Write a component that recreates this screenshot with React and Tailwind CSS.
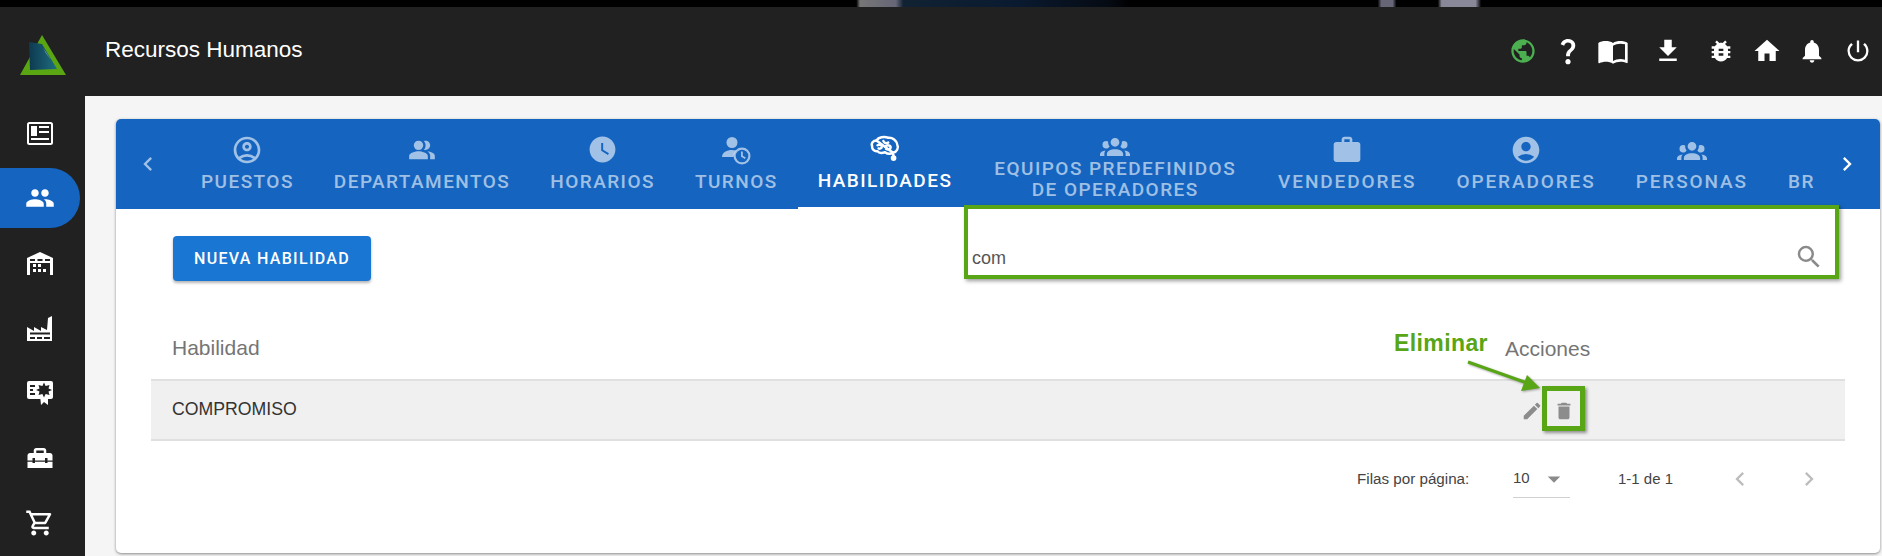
import React from 'react';
import {
  MdOutlineAccountCircle, MdPeopleAlt, MdWatchLater, MdWork, MdAccountCircle,
  MdChevronLeft, MdChevronRight, MdPeople, MdHomeRepairService, MdOutlineShoppingCart,
  MdPublic, MdQuestionMark, MdImportContacts, MdFileDownload, MdBugReport, MdHome,
  MdNotifications, MdPowerSettingsNew, MdSearch, MdEdit, MdDelete, MdArrowDropDown,
} from 'react-icons/md';

const Logo = () => (
  <svg width="46" height="40" viewBox="0 0 46 40">
    <defs>
      <linearGradient id="logoTeal" x1="0" x2="1" y1="0" y2="0">
        <stop offset="0" stopColor="#0d3a50" />
        <stop offset="1" stopColor="#1f6d80" />
      </linearGradient>
    </defs>
    <path d="M22 0L46 40H0Z" fill="#5aa512" />
    <path d="M9 7L22 9L37 34L10 35Z" fill="url(#logoTeal)" />
    <path d="M23 13L31 25L26 18Z" fill="#ffffff" />
  </svg>
);

const NewsIcon = () => (
  <svg width="26" height="23" viewBox="0 0 26 23">
    <rect x="1" y="1" width="24" height="21" rx="1.5" fill="none" stroke="#fff" strokeWidth="2" />
    <rect x="4" y="4" width="6" height="10" fill="#fff" />
    <rect x="12" y="4" width="10" height="2" fill="#fff" />
    <rect x="12" y="9" width="10" height="2" fill="#fff" />
    <rect x="4" y="16" width="18" height="2" fill="#fff" />
  </svg>
);

const WarehouseIcon = () => (
  <svg width="26" height="23" viewBox="0 0 26 23">
    <path d="M0 6L13 0L26 6V23H0Z" fill="#fff" />
    <path d="M3 7h5v2H3zM10.5 7h5v2h-5zM18 7h5v2h-5z" fill="#212121" />
    <rect x="3" y="11" width="20" height="12" fill="#212121" />
    <path d="M6 12h3v3H6zM11 12h3v3h-3zM6 17h3v3H6zM11 17h3v3h-3zM16 17h3v3h-3z" fill="#fff" />
  </svg>
);

const FactoryIcon = () => (
  <svg width="26" height="25" viewBox="0 0 26 25">
    <path d="M0 25V11L7 15V11L14 15V11L20 14L21 2L25 0V25Z" fill="#fff" />
    <path d="M3 16.5h20v2H3zM3 21h5v2H3zM10 21h5v2h-5zM17 21h6v2h-6z" fill="#212121" />
  </svg>
);

const CertIcon = () => (
  <svg width="26" height="24" viewBox="0 0 26 24">
    <rect x="0" y="0" width="26" height="18" rx="2" fill="#fff" />
    <path d="M13 14H21V24L17 21L14 24Z" fill="#fff" />
    <path d="M3 4h5v2H3zM3 8h3v2H3zM3 12h5v2H3z" fill="#212121" />
    <path d="M17 1.5L18.6 5L22.5 4L21.5 7.5L25 9L21.5 10.5L22.5 14L18.6 13L17 16.5L15.4 13L11.5 14L12.5 10.5L9 9L12.5 7.5L11.5 4L15.4 5Z" fill="#212121" />
  </svg>
);

// persona con reloj (pestaña Turnos)
const AccountClock = ({ size }) => (
  <svg width={size} height={size} viewBox="0 0 30 30" fill="currentColor">
    <circle cx="11" cy="7.5" r="5.5" />
    <path d="M1 22c0-4.500 5-7 10-7 1.500 0 3 .2 4.300.6A9 9 0 0 0 12.500 22Z" />
    <path fillRule="evenodd" d="M21 12.500a8.500 8.500 0 1 1 0 17 8.500 8.500 0 0 1 0-17Zm0 2.200a6.300 6.300 0 1 0 0 12.600 6.300 6.300 0 0 0 0-12.600ZM20 16.500h1.800v4.300l3 1.800-.9 1.500-3.900-2.300Z" />
  </svg>
);

const AccountGroup = ({ size }) => (
  <svg width={size} height={size} viewBox="0 0 24 24" fill="currentColor">
    <path d="M12,5.5A3.5,3.5 0 0,1 15.5,9A3.5,3.5 0 0,1 12,12.5A3.5,3.5 0 0,1 8.5,9A3.5,3.5 0 0,1 12,5.5M5,8C5.56,8 6.08,8.15 6.53,8.42C6.38,9.85 6.8,11.27 7.66,12.38C7.16,13.34 6.16,14 5,14A3,3 0 0,1 2,11A3,3 0 0,1 5,8M19,8A3,3 0 0,1 22,11A3,3 0 0,1 19,14C17.84,14 16.84,13.34 16.34,12.38C17.2,11.27 17.62,9.85 17.47,8.42C17.92,8.15 18.44,8 19,8M5.5,18.25C5.5,16.18 8.41,14.5 12,14.5C15.59,14.5 18.5,16.18 18.5,18.25V20H5.5V18.25M0,20V18.5C0,17.11 1.89,15.94 4.45,15.6C3.86,16.28 3.5,17.22 3.5,18.25V20H0M24,20H20.5V18.25C20.5,17.22 20.14,16.28 19.55,15.6C22.11,15.94 24,17.11 24,18.5V20Z" />
  </svg>
);

const Brain = ({ size }) => (
  <svg width={size} height={size} viewBox="0 0 28 26" fill="none" stroke="currentColor" strokeWidth="2.3" strokeLinecap="round" strokeLinejoin="round">
    <path d="M6 5C8 2 13 1 17 2.500C21 2 25 5 25.500 9C27 12 25 16 21.500 16.500L22 20" />
    <path d="M21.500 16.500C19 18 16 17.500 14 16C11 17 8 16.500 7 15C4 15.500 1.500 13 2 10C.8 8 3 5 6 5Z" />
    <path d="M7 9.500C9 8.500 11 9 11 11C11 12.500 9 13 8 12.500" />
    <path d="M12.500 5.500C13 7.500 15 8 17 7" />
    <path d="M15 10C17 9 20 10 19 12.500C18.500 13.800 16 13.500 15 13" />
    <circle cx="22" cy="21.500" r="1.500" fill="currentColor" />
  </svg>
);

const tabs = [
  { label: 'PUESTOS', Icon: MdOutlineAccountCircle, size: 32 },
  { label: 'DEPARTAMENTOS', Icon: MdPeopleAlt, size: 28 },
  { label: 'HORARIOS', Icon: MdWatchLater, size: 31 },
  { label: 'TURNOS', Icon: AccountClock, size: 30 },
  { label: 'HABILIDADES', Icon: Brain, size: 30, active: true },
  { label: 'EQUIPOS PREDEFINIDOS', line2: 'DE OPERADORES', Icon: AccountGroup, size: 30 },
  { label: 'VENDEDORES', Icon: MdWork, size: 32, wide: true },
  { label: 'OPERADORES', Icon: MdAccountCircle, size: 32, wide: true },
  { label: 'PERSONAS', Icon: AccountGroup, size: 30, wide: true },
  { label: 'BRIGADAS', Icon: AccountGroup, size: 30, hideIcon: true },
];

const headerIcons = [
  { Icon: MdPublic, cls: 'text-[#4caf50]', size: 28 },
  { Icon: MdQuestionMark, cls: 'text-white', size: 32 },
  { Icon: MdImportContacts, cls: 'text-white', size: 32 },
  { Icon: MdFileDownload, cls: 'text-white ml-[10px]', size: 30 },
  { Icon: MdBugReport, cls: 'text-white ml-[8px]', size: 28 },
  { Icon: MdHome, cls: 'text-white ml-[1px]', size: 30 },
  { Icon: MdNotifications, cls: 'text-white', size: 28 },
  { Icon: MdPowerSettingsNew, cls: 'text-white ml-[1px]', size: 28 },
];

const Tab = ({ tab }) => {
  const { label, line2, Icon, size, active, hideIcon, wide } = tab;
  return (
    <div className={`shrink-0 flex flex-col items-center justify-center h-[90px] ${line2 ? 'pt-[5px] px-[22px]' : 'pb-[2px] px-[20px]'} ${active ? 'text-white border-b-[2px] border-white' : 'text-white/60'}`}>
      <div className={`flex items-center justify-center ${line2 ? 'h-[24px]' : 'h-[30px] mb-[6px]'}`}>
        {!hideIcon && <Icon size={size} />}
      </div>
      <div className={`text-[19px] leading-[21px] font-medium text-center whitespace-nowrap font-['Roboto',sans-serif] ${wide ? 'tracking-[1.9px]' : 'tracking-[1.45px]'}`}>
        {label}
        {line2 && <br />}
        {line2}
      </div>
    </div>
  );
};

const SideItem = ({ children, active }) => (
  <div className={`h-[60px] w-[80px] flex items-center justify-center rounded-r-full ${active ? 'bg-[#1565c0]' : ''}`}>
    {children}
  </div>
);

export default function App() {
  return (
    <div className="w-full h-[556px] overflow-hidden flex flex-col bg-[#212121] font-['Liberation_Sans',sans-serif]">
      {/* tira de la imagen de fondo */}
      <div className="h-[7px] shrink-0 bg-[linear-gradient(90deg,#000_0%,#000_45.5%,#777_45.7%,#667_47.6%,#123_48%,#0a1a30_54%,#050a12_59%,#000_60%,#000_73.2%,#667_73.4%,#667_74%,#000_74.2%,#000_76.4%,#889_76.6%,#889_78.4%,#000_78.7%,#000_100%)]" />

      {/* Header */}
      <div className="h-[89px] shrink-0 flex items-center bg-[#212121]">
        <div className="w-[105px] shrink-0 pl-[20px] pt-[6px]">
          <Logo />
        </div>
        <div className="flex-1 text-[22.5px] text-white -mt-[4px]">Recursos Humanos</div>
        <div className="flex items-center pr-[2px] -mt-[2px]">
          {headerIcons.map(({ Icon, cls, size }, i) => (
            <div key={i} className={`w-[45px] flex justify-center ${cls}`}>
              <Icon size={size} />
            </div>
          ))}
        </div>
      </div>

      <div className="flex-1 flex min-h-0">
        {/* Sidebar */}
        <div className="w-[85px] shrink-0 flex flex-col gap-[5px] pt-[7px] text-white">
          <SideItem><NewsIcon /></SideItem>
          <SideItem active><MdPeople size={30} /></SideItem>
          <SideItem><WarehouseIcon /></SideItem>
          <SideItem><FactoryIcon /></SideItem>
          <SideItem><CertIcon /></SideItem>
          <SideItem><MdHomeRepairService size={30} /></SideItem>
          <SideItem><MdOutlineShoppingCart size={30} /></SideItem>
        </div>

        {/* Contenido */}
        <div className="flex-1 min-w-0 bg-[#f5f5f5] pt-[23px] pl-[31px] pr-[2px]">
          <div className="relative h-[434px] bg-white rounded-[5px] shadow-[0_1px_3px_rgba(0,0,0,0.45)]">
            {/* Tabs */}
            <div className="h-[90px] flex items-center bg-[#1565c0] rounded-t-[5px]">
              <div className="w-[65px] shrink-0 flex justify-center pr-[1px] text-white/60">
                <MdChevronLeft size={28} />
              </div>
              <div className="flex-1 min-w-0 flex overflow-hidden">
                {tabs.map((t) => <Tab key={t.label} tab={t} />)}
              </div>
              <div className="w-[66px] shrink-0 flex justify-center text-white">
                <MdChevronRight size={28} />
              </div>
            </div>

            {/* Toolbar */}
            <div className="flex justify-between pt-[27px] pl-[57px] pr-[56px]">
              <button className="w-[198px] h-[45px] rounded-[4px] bg-[#1976d2] text-white text-[16px] font-medium tracking-[1.3px] font-['Roboto',sans-serif] shadow-[0_2px_3px_rgba(0,0,0,0.3)]">
                NUEVA HABILIDAD
              </button>
              <div className="w-[852px] h-[45px] flex items-center justify-between">
                <input readOnly value="com" className="flex-1 min-w-0 text-[18px] text-[#555] outline-none bg-transparent" />
                <MdSearch size={30} className="text-[#8a8a8a] -mt-[4px]" />
              </div>
            </div>

            {/* Tabla */}
            <div className="mx-[35px] mt-[52px]">
              <div className="h-[46px] flex items-start text-[21px] text-[#757575] leading-[24px]">
                <div className="flex-1 pl-[21px] pt-[3px]">Habilidad</div>
                <div className="w-[340px] pt-[4px]">Acciones</div>
              </div>
              <div className="h-[62px] flex items-center bg-[#f0f0f0] border-y-2 border-[#e0e0e0]">
                <div className="flex-1 pl-[21px] pb-[2px] text-[17.7px] text-[#333]">COMPROMISO</div>
                <div className="w-[340px] flex items-center gap-[10px] pl-[16px] pt-[2px] text-[#8c8c8c]">
                  <MdEdit size={22} />
                  <MdDelete size={22} />
                </div>
              </div>

              {/* Paginacion */}
              <div className="h-[76px] flex items-center text-[15.2px] text-[#444]">
                <div className="ml-[1206px] w-[156px]">Filas por página:</div>
                <div className="relative w-[57px] h-[38px] flex items-center justify-between text-[15px] border-b border-[#d0d0d0]">
                  <span>10</span>
                  <MdArrowDropDown size={30} className="text-[#8a8a8a] mr-[1px]" />
                </div>
                <div className="ml-[48px] w-[54px] whitespace-nowrap text-[15px]">1-1 de 1</div>
                <MdChevronLeft size={28} className="ml-[54px] text-[#bdbdbd]" />
                <MdChevronRight size={28} className="ml-[41px] text-[#bdbdbd]" />
              </div>
            </div>

            {/* Anotaciones sobre la captura */}
            <div className="absolute left-[848px] top-[86px] w-[875px] h-[74px] border-[4px] border-[#58a515] shadow-[2px_2px_4px_rgba(0,0,0,0.4)]" />
            <div className="absolute left-[1278px] top-[211px] text-[23px] tracking-[0.4px] font-bold leading-[26px] text-[#58a515]">Eliminar</div>
            <svg className="absolute left-[1345px] top-[238px] drop-shadow-[1px_1px_1px_rgba(0,0,0,0.35)]" width="90" height="40" viewBox="0 0 90 40">
              <path d="M7 5L66 26" stroke="#58a515" strokeWidth="3" fill="none" />
              <path d="M79 31L60 34L66 18Z" fill="#58a515" />
            </svg>
            <div className="absolute left-[1426px] top-[267px] w-[43px] h-[45px] border-[5px] border-[#58a515] shadow-[2px_2px_3px_rgba(0,0,0,0.4)]" />
          </div>
        </div>
      </div>
    </div>
  );
}
